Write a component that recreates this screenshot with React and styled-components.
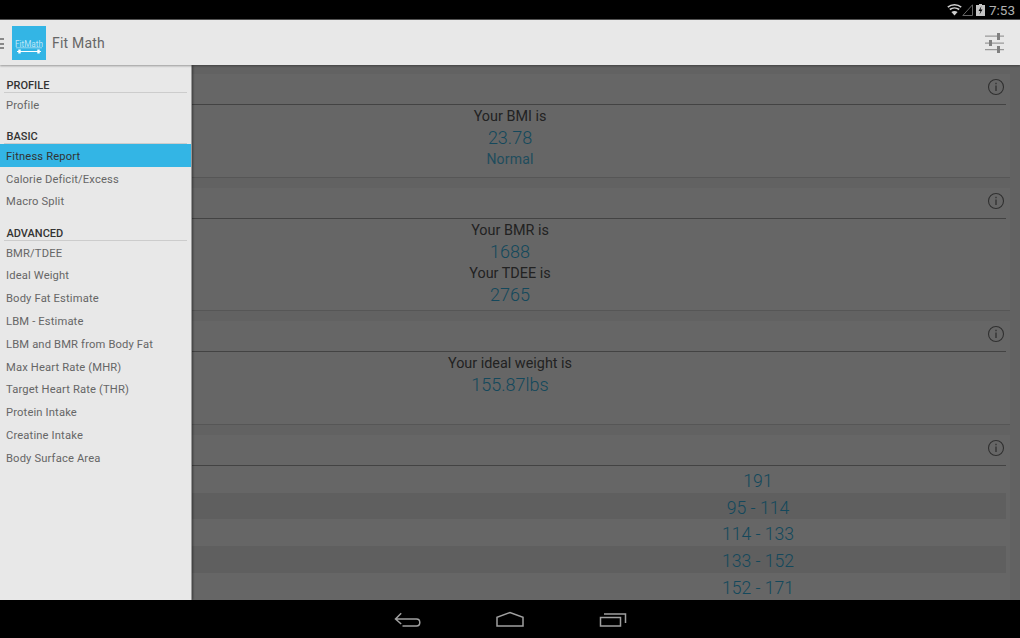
import React from "react";
import styled, { createGlobalStyle } from "styled-components";

const Global = createGlobalStyle`
  html, body { margin: 0; padding: 0; background: #000; }
  body { font-family: Roboto, "Liberation Sans", sans-serif; }
  * { box-sizing: border-box; }
`;
const Screen = styled.div`
  width: 1020px; height: 638px; display: flex; flex-direction: column; overflow: hidden;
`;
const StatusBar = styled.div`
  height: 20px; flex: none; background: #000; display: flex; align-items: center; justify-content: flex-end;
  padding-right: 5px; color: #b0b0b0; font-size: 13.5px;
  border-bottom: 1px solid #555;
`;
const Battery = styled.svg` margin-left: 3px; `;
const Clock = styled.span` margin-left: 4px; `;
const ActionBar = styled.div`
  height: 45px; flex: none; background: #e8e8e8; display: flex; align-items: center; position: relative; z-index: 3;
  box-shadow: 0 1px 2px rgba(0,0,0,.35);
`;
const Burger = styled.div`
  width: 4px; height: 11px; flex: none; margin-top: 1px;
  background: repeating-linear-gradient(#888 0 2px, transparent 2px 4.5px);
`;
const Logo = styled.div` width: 34px; height: 34px; margin-left: 8px; flex: none; `;
const Title = styled.div` margin-left: 6px; font-size: 14px; color: #666; flex: 1; letter-spacing: .2px; `;
const Tune = styled.div` width: 20px; height: 20px; margin-right: 15px; flex: none; display: flex; `;
const Main = styled.div` position: relative; height: 535px; flex: none; overflow: hidden; background: #f5f5f5; `;
const Content = styled.div`
  padding: 9px 10px 0; display: flex; flex-direction: column;
`;
const Card = styled.section`
  height: ${p => p.$h}px; flex: none; background: #fff; margin-bottom: ${p => p.$gap}px; padding: 0 4px;
  box-shadow: 0 1px 0 #d8d8d8;
`;
const CardHead = styled.div`
  height: 31px; border-bottom: 1px solid #a8a8a8; display: flex; align-items: center; justify-content: flex-end; padding: 0 1px 4px 0;
`;
const Body = styled.div` display: flex; flex-direction: column; align-items: center; padding-top: 1px; `;
const Label = styled.div` font-size: 14.4px; line-height: 21px; color: #555; `;
const Val = styled.div` font-size: 18px; font-weight: 300; line-height: 22px; color: #33b5e5; `;
const Note = styled.div` font-size: 14px; line-height: 20px; color: #33b5e5; opacity: .85; letter-spacing: .2px; `;
const Row = styled.div`
  height: 26.7px; width: 100%; background: ${p => p.$alt ? "#ededed" : "transparent"}; display: flex; align-items: center;
  font-size: 17.6px; font-weight: 300; color: #33b5e5; padding-top: 3px;
`;
const Cell = styled.div` width: 50%; text-align: center; `;
const Scrim = styled.div` position: absolute; inset: 0; background: rgba(0,0,0,.6); `;
const Drawer = styled.nav`
  position: absolute; left: 0; top: 0; bottom: 0; width: 192px; background: #e8e8e8;
  border-right: 1px solid #999; box-shadow: 1px 0 2px rgba(0,0,0,.4); padding-top: 14px; font-size: 11.2px;
`;
const Section = styled.div`
  font-weight: 500; color: #333; height: 14px; line-height: 13px; padding-left: 2.5px; margin: ${p => p.$top || 0}px 4px 0;
  border-bottom: 1px solid #ccc; font-size: 11px;
`;
const Item = styled.div`
  height: 22.8px; display: flex; align-items: center; padding: 2px 0 0 6px; color: ${p => p.$on ? "#333" : "#666"};
  background: ${p => p.$on ? "#33b5e5" : "transparent"}; letter-spacing: .15px;
`;
const NavBar = styled.div`
  flex: 1; background: #000; display: flex; align-items: center; justify-content: center; gap: 75px;
`;

const Info = () => (
  <svg width="18" height="18" viewBox="0 0 18 18" fill="none" stroke="#777">
    <circle cx="9" cy="9" r="7.5" strokeWidth="1.1" />
    <path d="M9 7.5V13M9 4.8V6.2" strokeWidth="1.3" />
  </svg>
);

const sections = [
  ["PROFILE", ["Profile"]],
  ["BASIC", ["Fitness Report", "Calorie Deficit/Excess", "Macro Split"]],
  ["ADVANCED", ["BMR/TDEE", "Ideal Weight", "Body Fat Estimate", "LBM - Estimate", "LBM and BMR from Body Fat", "Max Heart Rate (MHR)", "Target Heart Rate (THR)", "Protein Intake", "Creatine Intake", "Body Surface Area"]],
];
const tops = [0, 14.2, 14.3];
const rows = ["191", "95 - 114", "114 - 133", "133 - 152", "152 - 171"];

export default function App() {
  return (
    <Screen>
      <Global />
      <StatusBar>
        <svg width="15" height="12" viewBox="0 0 15 12" fill="none" stroke="#d0d0d0" strokeWidth="1.6">
          <path d="M.8 3.2C4.5 0 10.5 0 14.2 3.2" />
          <path d="M2.8 5.5C5.5 3.4 9.5 3.4 12.2 5.5" />
          <path d="M7.5 11.6L4.4 7.9C6.2 6.7 8.8 6.7 10.6 7.9z" fill="#d0d0d0" stroke="none" />
        </svg>
        <svg width="11" height="12" viewBox="0 0 11 12"><path d="M10.5.8V11.5H.8z" fill="none" stroke="#666" /></svg>
        <Battery width="9" height="12" viewBox="0 0 9 12">
          <path d="M3 0h3v1h3v11H0V1h3z" fill="#c4c4c4" />
          <path d="M5.5 2L2.5 7h2L3.5 10.5 6.5 5.5h-2z" fill="#000" />
        </Battery>
        <Clock>7:53</Clock>
      </StatusBar>
      <ActionBar>
        <Burger />
        <Logo>
          <svg width="34" height="34" viewBox="0 0 34 34">
            <rect width="34" height="34" fill="#33b5e5" />
            <text x="17" y="20.5" textAnchor="middle" fontSize="8.2" fontFamily="Roboto" fill="#bfe6f7">FitMath</text>
            <path d="M4 21.8H30" stroke="#bfe6f7" strokeWidth=".7" />
            <path d="M5 25.5H29" stroke="#fff" strokeWidth="1" />
            <path d="M7.5 23.5v4M26.5 23.5v4" stroke="#fff" strokeWidth="2.4" />
          </svg>
        </Logo>
        <Title>Fit Math</Title>
        <Tune>
          <svg width="20" height="20" viewBox="0 0 20 20" fill="#808080">
            <path d="M0 2.5h19v1.2H0zM0 9.5h19v1.2H0zM0 16h19v1.2H0z" fill="#999" />
            <rect x="12" y="0" width="3" height="7" /><rect x="4" y="7" width="3" height="6" /><rect x="12" y="13" width="3" height="7" />
          </svg>
        </Tune>
      </ActionBar>
      <Main>
        <Content>
          <Card $h={103} $gap={11}>
            <CardHead><Info /></CardHead>
            <Body>
              <Label>Your BMI is</Label>
              <Val>23.78</Val>
              <Note>Normal</Note>
            </Body>
          </Card>
          <Card $h={122} $gap={11}>
            <CardHead><Info /></CardHead>
            <Body>
              <Label>Your BMR is</Label>
              <Val>1688</Val>
              <Label>Your TDEE is</Label>
              <Val>2765</Val>
            </Body>
          </Card>
          <Card $h={103} $gap={11}>
            <CardHead><Info /></CardHead>
            <Body>
              <Label>Your ideal weight is</Label>
              <Val>155.87lbs</Val>
            </Body>
          </Card>
          <Card $h={170} $gap={0}>
            <CardHead><Info /></CardHead>
            {rows.map((r, i) => (
              <Row key={r} $alt={i % 2 === 1}><Cell /><Cell>{r}</Cell></Row>
            ))}
          </Card>
        </Content>
        <Scrim />
        <Drawer>
          {sections.map(([s, items], i) => (
            <React.Fragment key={s}>
              <Section $top={tops[i]}>{s}</Section>
              {items.map(t => <Item key={t} $on={t === "Fitness Report"}>{t}</Item>)}
            </React.Fragment>
          ))}
        </Drawer>
      </Main>
      <NavBar>
        <svg width="28" height="16" viewBox="0 0 28 16" fill="none" stroke="#a0a0a0" strokeWidth="1.5"><path d="M8.2 2.3L2.5 8 8.2 13M2.5 8H23.5C27.9 8 27.9 15 23.5 15H9.5" /></svg>
        <svg width="28" height="16" viewBox="0 0 28 16" fill="none" stroke="#a0a0a0" strokeWidth="1.5"><path d="M1 15V6.3L14 1.5 27 6.3V15z" /></svg>
        <svg width="28" height="16" viewBox="0 0 28 16" fill="none" stroke="#a0a0a0" strokeWidth="1.5"><path d="M1.5 6.5H21.5V15H1.5zM5 3H26.5V12" /></svg>
      </NavBar>
    </Screen>
  );
}
